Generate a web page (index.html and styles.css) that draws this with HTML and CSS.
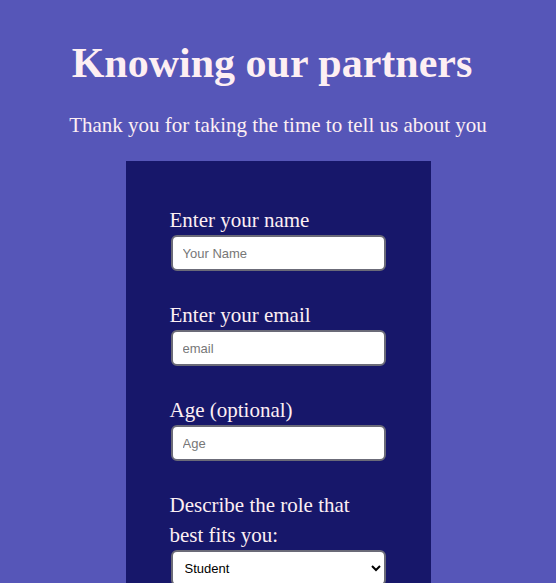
FILE: index.html
```html
<!DOCTYPE html>
<html>
<head>
<meta charset="utf-8">
<link rel="stylesheet" href="styles.css">
</head>
<body>
<header class="intro">
  <h1 class="title">Knowing our partners</h1>
  <p class="subtitle">Thank you for taking the time to tell us about you</p>
</header>
<form class="survey">
  <div class="field">
    <label class="label" for="name">Enter your name</label>
    <input class="input" id="name" type="text" placeholder="Your Name">
  </div>
  <div class="field">
    <label class="label" for="email">Enter your email</label>
    <input class="input" id="email" type="email" placeholder="email">
  </div>
  <div class="field">
    <label class="label" for="age">Age (optional)</label>
    <input class="input" id="age" type="number" placeholder="Age">
  </div>
  <div class="field">
    <label class="label" for="role">Describe the role that best fits you:</label>
    <select class="input select" id="role">
      <option>Student</option>
    </select>
  </div>
</form>
</body>
</html>
```
FILE: styles.css
```css
html, body {
  margin: 0;
  padding: 0;
}
body {
  background: #5656b8;
  color: #fdeff3;
  font-family: "Liberation Serif", serif;
  width: 556px;
  height: 583px;
  overflow: hidden;
}
.intro {
  text-align: center;
  padding-top: 38px;
}
.title {
  margin: 0;
  padding-right: 12px;
  font-size: 42px;
  line-height: 50px;
  font-weight: bold;
}
.subtitle {
  margin: 24px 0 0;
  font-size: 21px;
  line-height: 26px;
}
.survey {
  width: 305px;
  margin: 23px auto 0;
  background: #17176a;
  padding: 44px 0 0 44px;
  box-sizing: border-box;
  min-height: 500px;
}
.field {
  display: flex;
  flex-direction: column;
  align-items: flex-start;
  margin-bottom: 29px;
}
.label {
  font-size: 21px;
  line-height: 30px;
  width: 205px;
}
.input {
  width: 215px;
  height: 36px;
  box-sizing: border-box;
  margin-left: 1px;
  border: 2px solid #6b6b78;
  border-radius: 6px;
  background: #fff;
  padding: 0 10px;
  font-family: "Liberation Sans", Arial, sans-serif;
  font-size: 13px;
  color: #000;
}
.input::placeholder {
  color: #777;
}
.select {
  padding: 0 8px;
}
```
